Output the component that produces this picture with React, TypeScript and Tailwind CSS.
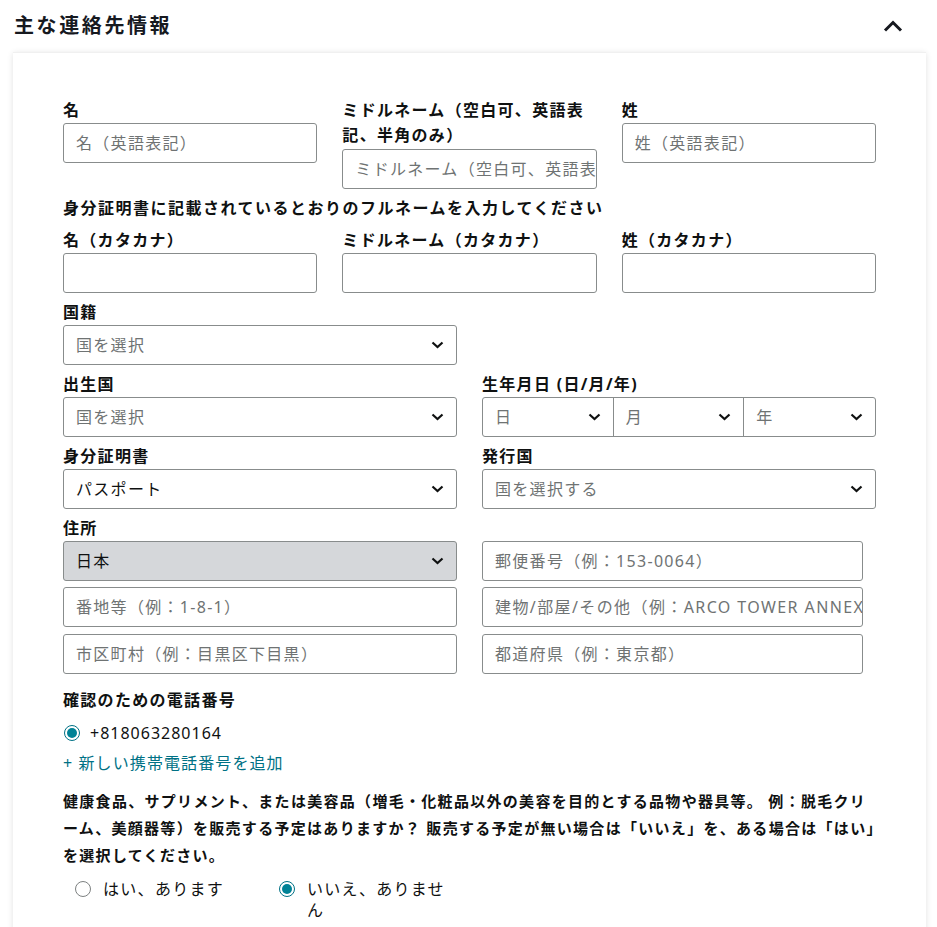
import React from "react";

const FONT = { fontFamily: '"Noto Sans", "Noto Sans CJK JP", sans-serif' };

function Label({ children, className = "" }: { children: React.ReactNode; className?: string }) {
  return (
    <div className={`text-[16px] font-bold leading-[25px] tracking-[1.3px] text-[#0f1111] ${className}`}>
      {children}
    </div>
  );
}

function TextInput({ placeholder, className = "" }: { placeholder?: string; className?: string }) {
  return (
    <div
      className={`h-10 flex items-center px-3 border border-[#888c8c] rounded-[3px] bg-white overflow-hidden whitespace-nowrap text-[16px] tracking-[1.3px] text-[#6f7373] ${className}`}
    >
      {placeholder}
    </div>
  );
}

function Chevron() {
  return (
    <svg width="13" height="8" viewBox="0 0 13 8" className="shrink-0">
      <polyline points="1.5,1.5 6.5,6 11.5,1.5" fill="none" stroke="#0f1111" strokeWidth="2.2" />
    </svg>
  );
}

function Select({ value, muted = true, gray = false }: { value: string; muted?: boolean; gray?: boolean }) {
  return (
    <div
      className={`h-10 flex items-center justify-between pl-3 pr-3 border border-[#888c8c] rounded-[3px] text-[16px] tracking-[1.3px] ${
        gray ? "bg-[#d5d7da]" : "bg-white"
      } ${muted ? "text-[#6f7373]" : "text-[#0f1111]"}`}
    >
      <span>{value}</span>
      <Chevron />
    </div>
  );
}

function Radio({ checked }: { checked?: boolean }) {
  return checked ? (
    <span className="block w-4 h-4 rounded-full border border-[#007185] flex items-center justify-center shrink-0">
      <span className="block w-[10px] h-[10px] rounded-full bg-[#008296]" />
    </span>
  ) : (
    <span className="block w-4 h-4 rounded-full border border-[#7d8181] bg-white shrink-0" />
  );
}

export default function App() {
  return (
    <div className="min-h-screen bg-white" style={FONT}>
      {/* Section header */}
      <div className="h-[52px] flex items-center justify-between pl-[14px] pr-[34px]">
        <h2 className="text-[20px] font-bold tracking-[2.6px] text-[#16191f]">主な連絡先情報</h2>
        <svg width="20" height="12" viewBox="0 0 20 12">
          <polyline points="2,10.5 10,2.5 18,10.5" fill="none" stroke="#16191f" strokeWidth="3" />
        </svg>
      </div>

      <div className="ml-[13px] w-[913px] bg-white border-t border-[#f0f0f0] shadow-[0_1px_6px_rgba(0,0,0,0.12)] px-[50px] pt-[45px] pb-6">
        <div className="flex flex-col gap-[7px]">
          {/* English names */}
          <div className="grid grid-cols-3 gap-x-[25px] items-start">
            <div>
              <Label>名</Label>
              <TextInput placeholder="名（英語表記）" />
            </div>
            <div>
              <Label>ミドルネーム（空白可、英語表記、半角のみ）</Label>
              <TextInput placeholder="ミドルネーム（空白可、英語表記、半角のみ）" className="mt-px" />
            </div>
            <div>
              <Label>姓</Label>
              <TextInput placeholder="姓（英語表記）" />
            </div>
          </div>

          <Label className="tracking-[1.5px]">身分証明書に記載されているとおりのフルネームを入力してください</Label>

          {/* Katakana names */}
          <div className="grid grid-cols-3 gap-x-[25px]">
            <div>
              <Label>名（カタカナ）</Label>
              <TextInput />
            </div>
            <div>
              <Label>ミドルネーム（カタカナ）</Label>
              <TextInput />
            </div>
            <div>
              <Label>姓（カタカナ）</Label>
              <TextInput />
            </div>
          </div>

          <div className="grid grid-cols-2 gap-x-[25px] gap-y-[7px]">
            <div>
              <Label>国籍</Label>
              <Select value="国を選択" />
            </div>
            <div />

            <div>
              <Label>出生国</Label>
              <Select value="国を選択" />
            </div>
            <div>
              <Label className="tracking-[0.9px]">生年月日 (日/月/年)</Label>
              <div className="grid grid-cols-3 h-10 border border-[#888c8c] rounded-[3px] divide-x divide-[#888c8c] text-[16px] tracking-[1.3px] text-[#6f7373]">
                {["日", "月", "年"].map((d) => (
                  <div key={d} className="flex items-center justify-between pl-3 pr-3">
                    <span>{d}</span>
                    <Chevron />
                  </div>
                ))}
              </div>
            </div>

            <div>
              <Label>身分証明書</Label>
              <Select value="パスポート" muted={false} />
            </div>
            <div>
              <Label>発行国</Label>
              <Select value="国を選択する" />
            </div>

            <div>
              <Label>住所</Label>
              <div className="flex flex-col gap-[6px]">
                <Select value="日本" muted={false} gray />
                <TextInput placeholder="番地等（例：1-8-1）" />
                <TextInput placeholder="市区町村（例：目黒区下目黒）" className="mt-px" />
              </div>
            </div>
            <div className="pt-[25px] pr-[13px]">
              <div className="flex flex-col gap-[6px]">
                <TextInput placeholder="郵便番号（例：153-0064）" />
                <TextInput placeholder="建物/部屋/その他（例：ARCO TOWER ANNEX）" className="tracking-[1.4px]" />
                <TextInput placeholder="都道府県（例：東京都）" className="mt-px" />
              </div>
            </div>
          </div>

          {/* Phone */}
          <div className="mt-[7px]">
            <Label>確認のための電話番号</Label>
            <div className="flex items-center gap-[10px] h-[26px] mt-[7px] pl-px text-[16px] tracking-[1px] text-[#0f1111]">
              <Radio checked />
              <span>+818063280164</span>
            </div>
            <div className="mt-[4px] text-[16px] leading-[26px] tracking-[1.1px] text-[#007185]">
              + 新しい携帯電話番号を追加
            </div>
          </div>

          {/* Question */}
          <div className="mt-[5px] text-[15px] font-bold leading-[27px] tracking-[1.3px] text-[#0f1111]">
            健康食品、サプリメント、または美容品（増毛・化粧品以外の美容を目的とする品物や器具等。 例：脱毛クリーム、美顔器等）を販売する予定はありますか？ 販売する予定が無い場合は「いいえ」を、ある場合は「はい」を選択してください。
          </div>

          <div className="flex items-start mt-[3px] pl-3 text-[16px] leading-[21px] tracking-[1.3px] text-[#0f1111]">
            <div className="w-[204px] flex items-start gap-3">
              <span className="mt-[2px]">
                <Radio />
              </span>
              <span>はい、あります</span>
            </div>
            <div className="w-[176px] flex items-start gap-3">
              <span className="mt-[2px]">
                <Radio checked />
              </span>
              <span>いいえ、ありません</span>
            </div>
          </div>
        </div>
      </div>
    </div>
  );
}
